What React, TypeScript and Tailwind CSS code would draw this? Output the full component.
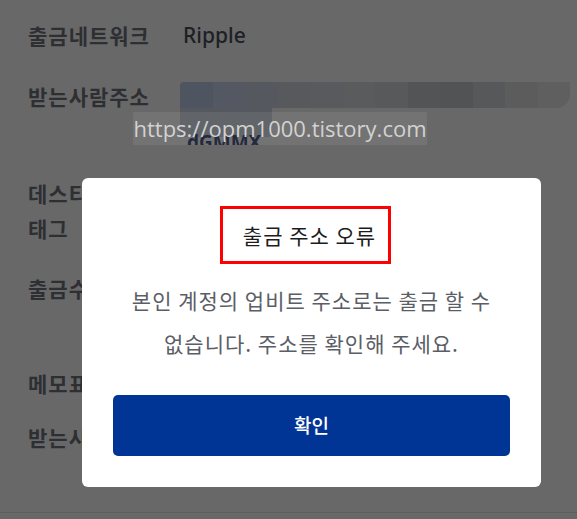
import React from "react"

const kr = { fontFamily: '"Noto Sans CJK KR", "Noto Sans", sans-serif' }

const blurShades = [
  "bg-[#4f5560]",
  "bg-[#535862]",
  "bg-[#55585f]",
  "bg-[#57595d]",
  "bg-[#595a5d]",
  "bg-[#5a5b5d]",
  "bg-[#58595b]",
  "bg-[#535456]",
  "bg-[#525355]",
  "bg-[#57585a]",
  "bg-[#5c5c5d]",
  "bg-[#5f5f60]",
]

function Label({ children, className = "" }: { children: React.ReactNode; className?: string }) {
  return (
    <div
      className={`h-6 leading-6 text-[21px] tracking-[1px] font-bold text-[#2e2f33] ${className}`}
      style={kr}
    >
      {children}
    </div>
  )
}

export default function App() {
  return (
    <div className="relative w-[577px] h-[519px] overflow-hidden bg-[#686868]" style={kr}>
      {/* page behind the overlay */}
      <div className="flex flex-col pl-[28px] pt-[23px]">
        <div className="flex items-center">
          <Label className="w-[155px]">출금네트워크</Label>
          <span
            className="text-[21px] font-medium text-[#1d2025] leading-6"
            style={{ fontFamily: '"Noto Sans", sans-serif' }}
          >
            Ripple
          </span>
        </div>

        <div className="flex mt-[37px]">
          <Label className="w-[152px]">받는사람주소</Label>
          <div className="flex flex-col flex-1 -mt-[2px] pr-[7px]">
            <div className="flex h-[26px] rounded-br-[14px] rounded-tl-[4px] overflow-hidden">
              {blurShades.map((c, i) => (
                <div key={i} className={`flex-1 ${c}`} />
              ))}
            </div>
            <div className="flex h-[37px] overflow-hidden">
              <div className="flex flex-col w-[92px] shrink-0">
                <div className="shrink-0 h-[29px] bg-[#55595f] rounded-br-[4px]" />
                <span
                  className="shrink-0 -mt-[7px] pl-[7px] text-[19px] font-bold leading-6 text-[#141a30]"
                  style={{ fontFamily: '"Noto Sans", sans-serif' }}
                >
                  dGMMX
                </span>
              </div>
            </div>
          </div>
        </div>

        <Label className="mt-[36px]">데스티네이션</Label>
        <Label className="mt-[11px]">태그</Label>
        <Label className="mt-[36px]">출금수량</Label>
        <Label className="mt-[71px]">메모표시</Label>
        <Label className="mt-[30px]">받는사람</Label>
      </div>

      {/* watermark */}
      <div
        className="absolute left-[133px] top-[112px] w-[294px] h-[33px] bg-white/[0.07] flex items-center justify-center text-[22px] text-[#d2d2d2]"
        style={{ fontFamily: '"Open Sans", "Noto Sans", sans-serif' }}
      >
        https://opm1000.tistory.com
      </div>

      {/* bottom divider */}
      <div className="absolute left-0 right-0 top-[512px] h-px bg-[#5e5e5e]" />

      {/* modal */}
      <div className="absolute left-[82px] top-[178px] w-[459px] h-[309px] bg-white rounded-[6px] flex flex-col items-center px-[31px] pt-[28px]">
        <div className="self-start ml-[107px] w-[171px] h-[58px] border-[3px] border-[#ff0000] flex items-center justify-center">
          <span className="text-[21px] tracking-[1px] text-[#1c1c1c] leading-none pl-[8px]">출금 주소 오류</span>
        </div>
        <p className="mt-[15px] text-center text-[21px] tracking-[1px] leading-[43px] text-[#5b5e66] -mx-[20px]">
          본인 계정의 업비트 주소로는 출금 할 수
          <br />
          없습니다. 주소를 확인해 주세요.
        </p>
        <button className="mt-[30px] w-full h-[61px] rounded-[5px] bg-[#003595] text-white text-[19px] font-medium">
          확인
        </button>
      </div>
    </div>
  )
}
